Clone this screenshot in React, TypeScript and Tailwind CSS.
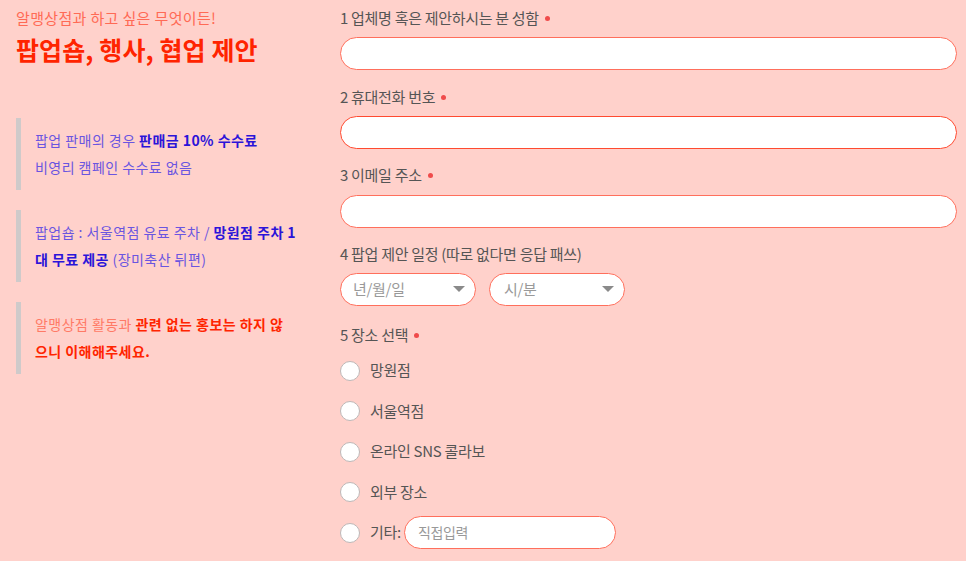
import React from "react";

const Dot = () => (
  <span className="ml-[6px] inline-block w-[5px] h-[5px] rounded-full bg-[#f04b4b] align-middle relative top-[-1px]" />
);

const Caret = () => (
  <svg width="12" height="7" viewBox="0 0 12 7" className="shrink-0">
    <path d="M0 0 L12 0 L6 6 Z" fill="#8a8a8a" />
  </svg>
);

export default function App() {
  const radios = ["망원점", "서울역점", "온라인 SNS 콜라보", "외부 장소"];
  return (
    <div
      className="w-[966px] h-[561px] bg-[#ffd1cb] flex overflow-hidden"
      style={{ fontFamily: '"Noto Sans CJK KR", "Noto Sans", sans-serif' }}
    >
      <div className="w-[340px] pl-4 shrink-0">
        <div className="mt-[6px] text-[15px] leading-[24px] text-[#ff6a55] tracking-[0.35px]">
          알맹상점과 하고 싶은 무엇이든!
        </div>
        <div className="mt-[2px] text-[25px] leading-[34px] font-bold text-[#ff2400] tracking-[0.1px]">
          팝업숍, 행사, 협업 제안
        </div>
        <div className="mt-[52px] flex flex-col gap-[20px] w-[290px]">
          <div className="border-l-[5px] border-[#cfcaca] pl-[14px] py-[9px] text-[14px] leading-[27px] text-[#6a55e0] tracking-[0.45px] whitespace-nowrap">
            <div>
              팝업 판매의 경우 <b className="text-[#2b14d9]">판매금 10% 수수료</b>
            </div>
            <div>비영리 캠페인 수수료 없음</div>
          </div>
          <div className="border-l-[5px] border-[#cfcaca] pl-[14px] py-[9px] text-[14px] leading-[27px] text-[#6a55e0] tracking-[0.45px] whitespace-nowrap">
            <div>
              팝업숍 : 서울역점 유료 주차 / <b className="text-[#2b14d9]">망원점 주차 1</b>
            </div>
            <div>
              <b className="text-[#2b14d9]">대 무료 제공</b> (장미축산 뒤편)
            </div>
          </div>
          <div className="border-l-[5px] border-[#cfcaca] pl-[14px] py-[9px] text-[14px] leading-[27px] text-[#ff7a66] tracking-[0.45px] whitespace-nowrap">
            <div>
              알맹상점 활동과 <b className="text-[#ff2400]">관련 없는 홍보는 하지 않</b>
            </div>
            <div>
              <b className="text-[#ff2400]">으니 이해해주세요.</b>
            </div>
          </div>
        </div>
      </div>

      <div className="w-[617px] text-[#555] text-[15px] tracking-[-0.3px]">
        <div className="mt-[6px] leading-[24px]">
          1 업체명 혹은 제안하시는 분 성함<Dot />
        </div>
        <div className="mt-[7px] h-[33px] rounded-full bg-white border border-[#ff6f5c]" />
        <div className="mt-[15px] leading-[24px]">
          2 휴대전화 번호<Dot />
        </div>
        <div className="mt-[7px] h-[33px] rounded-full bg-white border border-[#ff4a30]" />
        <div className="mt-[14px] leading-[24px]">
          3 이메일 주소<Dot />
        </div>
        <div className="mt-[8px] h-[33px] rounded-full bg-white border border-[#ff6f5c]" />
        <div className="mt-[14px] leading-[24px]">4 팝업 제안 일정 (따로 없다면 응답 패쓰)</div>
        <div className="mt-[7px] flex gap-[13px]">
          <div className="w-[136px] h-[33px] rounded-full bg-white border border-[#ff6f5c] flex items-center justify-between pl-[12px] pr-[10px] text-[#999]">
            <span>년/월/일</span>
            <Caret />
          </div>
          <div className="w-[136px] h-[33px] rounded-full bg-white border border-[#ff6f5c] flex items-center justify-between pl-[14px] pr-[10px] text-[#999]">
            <span>시/분</span>
            <Caret />
          </div>
        </div>
        <div className="mt-[17px] leading-[24px]">
          5 장소 선택<Dot />
        </div>
        <div className="mt-[12px] flex flex-col gap-[17.5px]">
          {radios.map((r) => (
            <div key={r} className="flex items-center h-[23px]">
              <div className="w-[20px] h-[20px] rounded-full bg-white border border-[#bdb8b8]" />
              <span className="ml-[10px]">{r}</span>
            </div>
          ))}
          <div className="flex items-center h-[23px]">
            <div className="w-[20px] h-[20px] rounded-full bg-white border border-[#bdb8b8]" />
            <span className="ml-[10px]">기타:</span>
            <div className="ml-[3px] w-[212px] h-[33px] rounded-full bg-white border border-[#ff6f5c] flex items-center pl-[13px] text-[14px] text-[#999]">
              직접입력
            </div>
          </div>
        </div>
      </div>
    </div>
  );
}
